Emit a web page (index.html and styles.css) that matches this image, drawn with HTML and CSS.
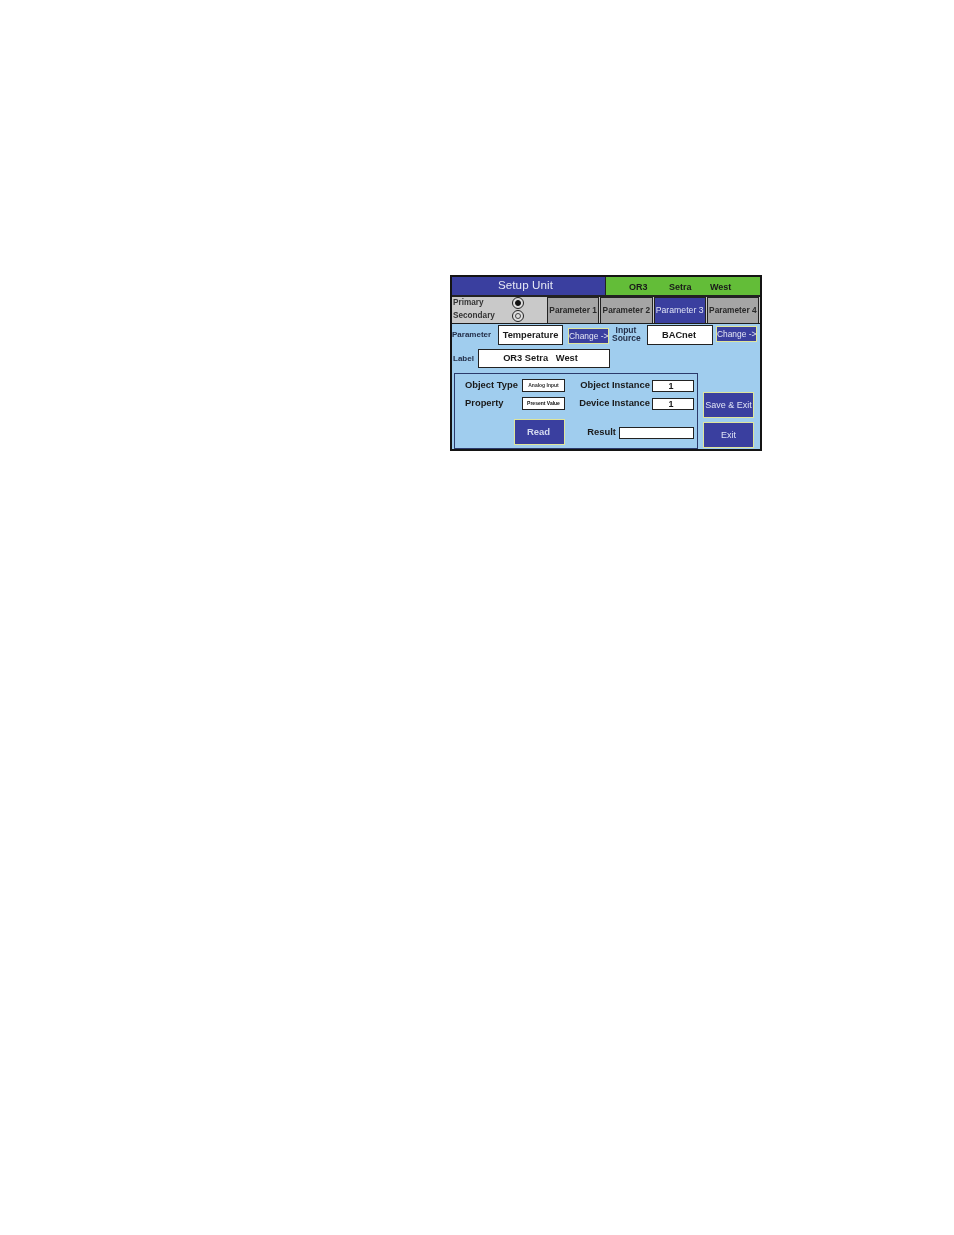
FILE: index.html
```html
<!DOCTYPE html>
<html lang="en">
<head>
<meta charset="utf-8">
<title>Setup Unit</title>
<link rel="stylesheet" href="styles.css">
</head>
<body>
<main class="panel">
  <header class="titlebar">
    <h1 class="title">Setup Unit</h1>
    <div class="unit-name"><span>OR3</span><span>Setra</span><span>West</span></div>
  </header>
  <nav class="tabsbar">
    <div class="sources">
      <div class="source"><span>Primary</span><i class="radio on"></i></div>
      <div class="source"><span>Secondary</span><i class="radio"></i></div>
    </div>
    <div class="tabs">
      <div class="tab">Parameter 1</div>
      <div class="tab">Parameter 2</div>
      <div class="tab active">Parameter 3</div>
      <div class="tab">Parameter 4</div>
    </div>
  </nav>
  <section class="body">
    <div class="main-col">
      <div class="param-row">
        <span class="lbl param-lbl">Parameter</span>
        <div class="box param-box">Temperature</div>
        <div class="change change-a">Change -&gt;</div>
        <span class="lbl input-lbl">Input<br>Source</span>
        <div class="box source-box">BACnet</div>
        <div class="change change-b">Change -&gt;</div>
      </div>
      <div class="label-row">
        <span class="lbl label-lbl">Label</span>
        <div class="box label-box">OR3 Setra&nbsp;&nbsp; West</div>
      </div>
      <div class="lower">
        <div class="fields">
          <span class="f-name f-type">Object Type</span>
          <div class="mini">Analog Input</div>
          <span class="f-name f-right">Object Instance</span>
          <div class="box num">1</div>
          <span class="f-name f-type">Property</span>
          <div class="mini strong">Present Value</div>
          <span class="f-name f-right">Device Instance</span>
          <div class="box num">1</div>
          <div class="read-row">
            <div class="read">Read</div>
            <span class="f-name f-result">Result</span>
            <div class="box result"></div>
          </div>
        </div>
        <div class="actions">
          <div class="action">Save &amp; Exit</div>
          <div class="action">Exit</div>
        </div>
      </div>
    </div>
  </section>
</main>
</body>
</html>
```
FILE: styles.css
```css
* { box-sizing: border-box; }
html, body { margin: 0; background: #fff; }
body { padding: 275px 0 0 450px; height: 1235px; overflow: hidden; font-family: "Liberation Sans", Arial, sans-serif; color: #1a1a1a; }

.panel { width: 312px; height: 176px; border: 2px solid #141414; background: #a0cdee; filter: blur(0.35px); display: flex; flex-direction: column; }

.titlebar { display: flex; height: 20px; border-bottom: 2px solid #222; }
.title { margin: 0; width: 154px; padding-right: 6px; background: #3a3f9f; color: #e6e8f5; font: 400 11.6px/15px "Liberation Sans", Arial, sans-serif; letter-spacing: .1px; text-align: center; border-right: 1px solid #222; }
.unit-name { flex: 1; background: #63bd38; font-size: 9px; font-weight: 700; line-height: 20px; display: flex; padding-left: 23px; }
.unit-name span:nth-child(1) { width: 40px; }
.unit-name span:nth-child(2) { width: 41px; }

.tabsbar { display: flex; height: 27px; background: #c9c9c9; border-bottom: 1px solid #1c1c1c; }
.sources { width: 95px; padding: 0 0 0 1px; display: flex; flex-direction: column; gap: 2px; }
.source { display: flex; align-items: center; justify-content: space-between; height: 11px; padding-right: 23px; font-size: 8.2px; font-weight: 700; color: #333; }
.radio { width: 12px; height: 12px; flex: none; border-radius: 50%; border: 1px solid #222; background: #ddd; position: relative; display: block; }
.radio::after { content: ""; position: absolute; inset: 2px; border-radius: 50%; border: 1px solid #444; }
.radio.on::after { background: #111; border-color: #111; }

.tabs { flex: 1; display: flex; gap: 1px; }
.tab { width: 52.25px; background: #a5a5a5; border: 1px solid #222; border-bottom: 0; font-size: 8.3px; font-weight: 700; color: #2a2a2a; line-height: 25px; text-align: center; white-space: nowrap; }
.tab.active { background: #3a3f9f; color: #dfe3f5; font-weight: 400; font-size: 8.7px; }

.body { flex: 1; min-height: 0; }
.main-col { display: flex; flex-direction: column; }

.box { background: #fff; border: 1px solid #222; font-weight: 700; text-align: center; color: #1a1a1a; }
.lbl { font-weight: 700; font-size: 8px; color: #24304a; }

.param-row { display: flex; align-items: flex-start; height: 25px; padding-top: 1px; }
.param-lbl { width: 46px; line-height: 20px; }
.param-box { width: 65px; height: 20px; font-size: 9.3px; line-height: 18px; }
.change { width: 41px; height: 16px; background: #3a3f9f; border: 1px solid #dfe59a; color: #e6e8f5; font-size: 8.4px; line-height: 15px; text-align: center; white-space: nowrap; }
.change-a { margin: 3px 0 0 5px; }
.input-lbl { width: 28px; margin: 1px 7px 0 3px; font-size: 8.5px; line-height: 8px; text-align: center; }
.source-box { width: 66px; height: 20px; font-size: 9.3px; line-height: 18px; padding-right: 2px; }
.change-b { margin: 1px 0 0 3px; }

.label-row { display: flex; height: 24px; }
.label-lbl { width: 26px; padding-left: 1px; line-height: 19px; }
.label-box { width: 132px; height: 19px; font-size: 9.3px; line-height: 17px; padding-right: 7px; }

.lower { display: flex; }
.fields { margin-left: 2px; width: 244px; height: 76px; border: 1px solid #2b3a6b; display: grid; grid-template-columns: 67px 43px 87px 42px; grid-template-rows: 13px 13px auto; row-gap: 5px; padding-top: 5px; align-items: center; }
.f-name { font-size: 9.4px; font-weight: 700; white-space: nowrap; }
.f-type { padding-left: 10px; margin-bottom: 3px; }
.f-right { text-align: right; padding-right: 2px; margin-bottom: 3px; }
.mini { height: 13px; background: #fff; border: 1px solid #222; font-size: 5px; font-weight: 700; text-align: center; line-height: 11px; white-space: nowrap; color: #333; }
.mini.strong { color: #111; }
.num { height: 12px; font-size: 9px; line-height: 10px; padding-right: 4px; }

.read-row { grid-column: 1 / -1; align-self: start; display: flex; align-items: flex-start; padding-left: 59px; }
.read { width: 51px; height: 26px; background: #3a3f9f; border: 1px solid #dfe59a; color: #d4daf0; font-size: 9.5px; font-weight: 700; line-height: 24px; text-align: center; margin-top: 4px; padding-right: 2px; }
.f-result { width: 54px; text-align: right; padding-right: 3px; margin-top: 11px; line-height: 12px; }
.result { height: 12px; width: 75px; margin-top: 12px; }

.actions { display: flex; flex-direction: column; gap: 4px; margin: 19px 0 0 5px; }
.action { width: 51px; height: 26px; background: #3a3f9f; border: 1px solid #dfe59a; color: #dfe3f5; font-size: 9px; line-height: 25px; text-align: center; white-space: nowrap; }
```
